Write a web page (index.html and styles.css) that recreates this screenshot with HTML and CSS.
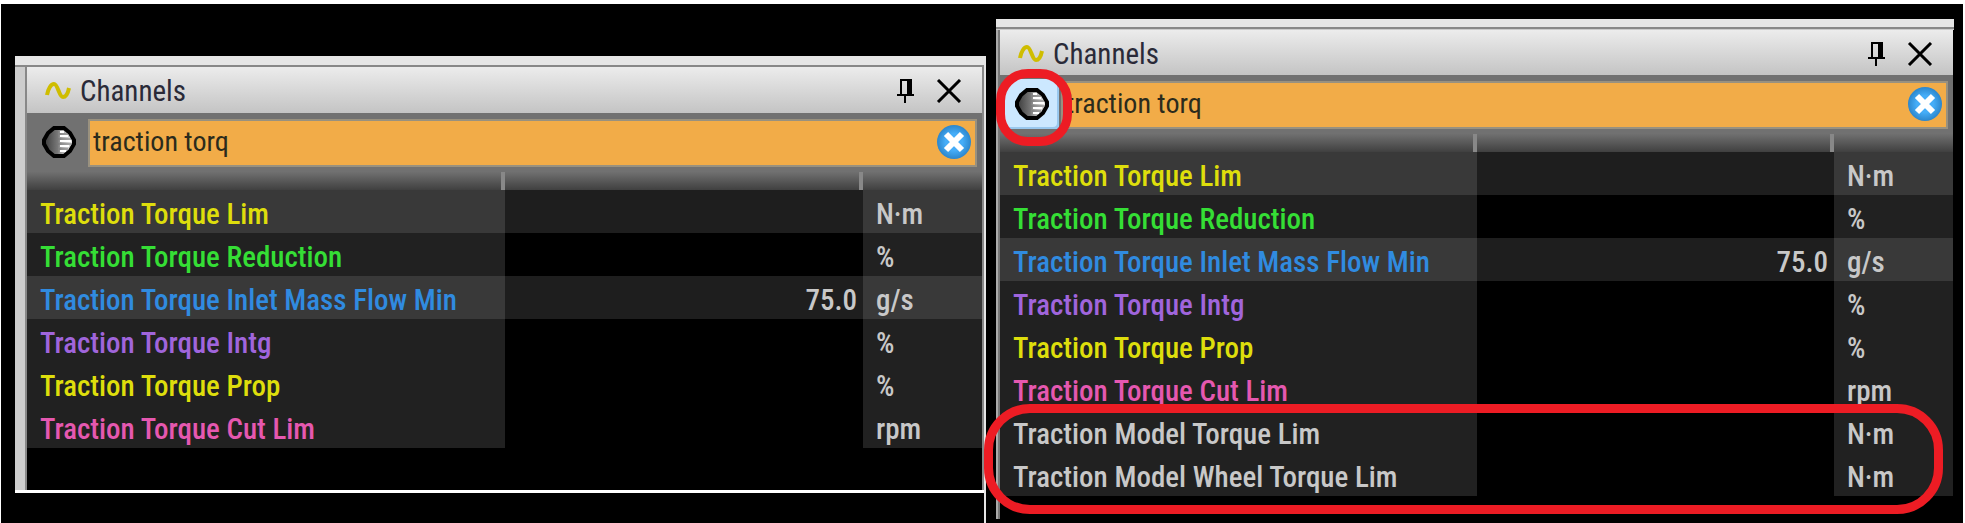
FILE: index.html
```html
<!DOCTYPE html>
<html lang="en">
<head>
    <meta charset="UTF-8">
    <meta name="viewport" content="width=device-width, initial-scale=1.0">
    <title>Channels</title>
    <link rel="stylesheet" href="styles.css">
</head>
<body>

<!-- Shared icons -->
<svg class="sprites" aria-hidden="true">
    <linearGradient id="shade">
        <stop offset="0" stop-color="#3a3a3a"/>
        <stop offset="0.45" stop-color="#777"/>
        <stop offset="0.6" stop-color="#aaa"/>
        <stop offset="1" stop-color="#f2f2f2"/>
    </linearGradient>
    <radialGradient id="blue">
        <stop offset="0.5" stop-color="#45adf8"/>
        <stop offset="1" stop-color="#2c86cc"/>
    </radialGradient>
    <symbol id="wave" viewBox="0 0 26 18">
        <path d="M2 13 C3 7 6 2 9 2 C13 2 14 15 18 15 C21 15 23 11 24 6" fill="none" stroke="#cfbd00" stroke-width="4"/>
    </symbol>
    <symbol id="pin" viewBox="0 0 18 26">
        <path d="M4 16 V2 H14 V16 M0 17 H17 M8 17 V25" fill="none" stroke="#000" stroke-width="2"/>
        <path d="M10 2 H15 V16 H10 Z"/>
    </symbol>
    <symbol id="close" viewBox="0 0 26 24">
        <path d="M2 1 L24 23 M24 1 L2 23" stroke="#000" stroke-width="3"/>
    </symbol>
    <symbol id="filter" viewBox="0 0 34 32">
        <path d="M12 2 H22 L28 7 L32 14 V18 L28 25 L22 30 H12 L6 25 L2 18 V14 L6 7 Z" fill="url(#shade)" stroke="#000" stroke-width="4"/>
        <path d="M17 8 H26 M16 13 H29 M16 18 H30 M17 23 H26" stroke="#777" stroke-width="1"/>
        <path d="M18 6 H22 M18 10 H26 M18 15 H29 M18 20 H27 M18 25 H24" stroke="#fff" stroke-width="2"/>
    </symbol>
    <symbol id="clear" viewBox="0 0 34 34">
        <circle cx="17" cy="17" r="17" fill="url(#blue)"/>
        <path d="M9 9 L25 25 M25 9 L9 25" stroke="#fff" stroke-width="6"/>
    </symbol>
</svg>

<div class="side side-before">
    <section class="panel">
        <div class="titlebar">
            <svg class="icon-wave"><use href="#wave"/></svg>
            <h2>Channels</h2>
            <button class="tool" aria-label="Pin"><svg class="icon-pin"><use href="#pin"/></svg></button>
            <button class="tool" aria-label="Close"><svg class="icon-close"><use href="#close"/></svg></button>
        </div>
        <div class="search">
            <button class="filter" aria-label="Match words"><svg class="icon-filter"><use href="#filter"/></svg></button>
            <div class="field">
                <input type="text" value="traction torq" aria-label="Search channels">
                <button class="tool" aria-label="Clear search"><svg class="icon-clear"><use href="#clear"/></svg></button>
            </div>
        </div>
        <table class="channels">
            <thead>
                <tr><th class="name"></th><th class="value"></th><th class="unit"></th></tr>
            </thead>
            <tbody>
                <tr class="lit"><td class="yellow">Traction Torque Lim</td><td></td><td>N·m</td></tr>
                <tr><td class="green">Traction Torque Reduction</td><td></td><td>%</td></tr>
                <tr class="lit"><td class="blue">Traction Torque Inlet Mass Flow Min</td><td>75.0</td><td>g/s</td></tr>
                <tr><td class="purple">Traction Torque Intg</td><td></td><td>%</td></tr>
                <tr><td class="yellow">Traction Torque Prop</td><td></td><td>%</td></tr>
                <tr><td class="pink">Traction Torque Cut Lim</td><td></td><td>rpm</td></tr>
            </tbody>
        </table>
    </section>
</div>

<div class="side side-after">
    <section class="panel">
        <div class="titlebar">
            <svg class="icon-wave"><use href="#wave"/></svg>
            <h2>Channels</h2>
            <button class="tool" aria-label="Pin"><svg class="icon-pin"><use href="#pin"/></svg></button>
            <button class="tool" aria-label="Close"><svg class="icon-close"><use href="#close"/></svg></button>
        </div>
        <div class="search">
            <button class="filter active" aria-label="Match words" aria-pressed="true"><svg class="icon-filter"><use href="#filter"/></svg></button>
            <div class="field">
                <input type="text" value="traction torq" aria-label="Search channels">
                <button class="tool" aria-label="Clear search"><svg class="icon-clear"><use href="#clear"/></svg></button>
            </div>
        </div>
        <table class="channels">
            <thead>
                <tr><th class="name"></th><th class="value"></th><th class="unit"></th></tr>
            </thead>
            <tbody>
                <tr class="lit"><td class="yellow">Traction Torque Lim</td><td></td><td>N·m</td></tr>
                <tr><td class="green">Traction Torque Reduction</td><td></td><td>%</td></tr>
                <tr class="lit"><td class="blue">Traction Torque Inlet Mass Flow Min</td><td>75.0</td><td>g/s</td></tr>
                <tr><td class="purple">Traction Torque Intg</td><td></td><td>%</td></tr>
                <tr><td class="yellow">Traction Torque Prop</td><td></td><td>%</td></tr>
                <tr><td class="pink">Traction Torque Cut Lim</td><td></td><td>rpm</td></tr>
                <tr><td>Traction Model Torque Lim</td><td></td><td>N·m</td></tr>
                <tr><td>Traction Model Wheel Torque Lim</td><td></td><td>N·m</td></tr>
            </tbody>
        </table>
    </section>
    <div class="mark mark-button"></div>
    <div class="mark mark-rows"></div>
</div>

</body>
</html>
```

FILE: styles.css
```css
* {
    box-sizing: border-box;
}
body {
    margin: 0;
    min-height: 100vh;
    display: flex;
    gap: 10px;
    padding: 0 9px 0 14px;
    border: solid white;
    border-width: 4px 2px 0 1px;
    background: black;
    overflow: hidden;
    font-family: "Roboto Condensed", "Liberation Sans Narrow", Roboto, sans-serif;
}
.sprites {
    position: absolute;
    width: 0;
    height: 0;
}

/* The two windows */
.side {
    min-width: 0;
}
.side-before {
    flex: 969 1 0;
    margin-top: 52px;
    border-right: 2px solid #e6e6e6;
}
.side-after {
    flex: 958 1 0;
    position: relative;
    margin-top: 15px;
}
.side-before .panel {
    padding: 11px 2px 42px 12px;
    border-bottom: 3px solid #fff;
    background: linear-gradient(#e6e6e6 9px, #888 9px, #888 11px, transparent 11px),
        linear-gradient(#888, #888) right / 2px 100% no-repeat,
        linear-gradient(to right, #cdcdcd 10px, #888 10px, #888 12px, black 12px);
}
.side-after .panel {
    padding: 11px 1px 23px 4px;
    background: linear-gradient(#e6e6e6 8px, #888 8px, #888 10px, #ccc 10px, #ccc 11px, transparent 11px),
        linear-gradient(to right, #aaa 2px, #777 2px, #777 4px, black 4px);
}

/* Title bar */
.titlebar {
    display: flex;
    align-items: center;
    gap: 9px;
    height: 46px;
    padding: 2px 20px 0 18px;
    background: linear-gradient(#ececec, #c4c4c4);
}
.side-after .titlebar {
    height: 45px;
}
.titlebar h2 {
    flex: 1;
    margin: 0;
    font-size: 29px;
    font-weight: normal;
    line-height: 36px;
    color: #2a2a38;
}
.titlebar .tool + .tool {
    margin-left: 12px;
}
.tool {
    display: flex;
    padding: 0;
    border: none;
    background: none;
    cursor: pointer;
}
.icon-wave {
    width: 26px;
    height: 18px;
}
.icon-pin {
    width: 18px;
    height: 26px;
}
.icon-close {
    width: 26px;
    height: 24px;
}
.icon-filter {
    width: 34px;
    height: 32px;
}
.icon-clear {
    width: 34px;
    height: 34px;
}

/* Search row */
.search {
    display: flex;
    align-items: flex-end;
    gap: 2px;
    height: 59px;
    padding: 0 5px 5px 4px;
    background: #717171;
}
.filter {
    display: flex;
    align-items: center;
    justify-content: center;
    width: 55px;
    height: 50px;
    padding: 0;
    border: none;
    border-radius: 4px;
    background: none;
    cursor: pointer;
}
.filter.active {
    background: #cce8ff;
    box-shadow: inset -2px -2px #99c8ee;
}
.field {
    flex: 1;
    display: flex;
    align-items: center;
    height: 48px;
    padding: 0 4px 2px 3px;
    border: 2px solid #99917f;
    background: #f2ac48;
}
.field input {
    flex: 1;
    min-width: 0;
    padding: 0;
    border: none;
    outline: none;
    background: none;
    font-family: inherit;
    font-size: 28px;
    line-height: 36px;
    color: #2b2b1c;
}

/* Channel list */
.channels {
    width: 100%;
    table-layout: fixed;
    border-collapse: collapse;
    font-size: 29px;
    font-weight: 500;
    line-height: 34px;
    color: #c8c8c8;
}
.channels thead tr {
    background: linear-gradient(#707070, #404040);
}
.channels th {
    height: 18px;
    padding: 0;
}
.channels .name {
    width: 50%;
}
.channels .unit {
    width: 119px;
}
.channels .name,
.channels .value {
    background: linear-gradient(#888, #888) right / 4px 100% no-repeat;
}
.channels td {
    height: 43px;
    padding: 4px 13px 0;
    background: #212121;
    white-space: nowrap;
}
.channels td:nth-child(2) {
    padding: 4px 6px 0;
    background: black;
    text-align: right;
}
.channels .lit td {
    background: #393939;
}
.channels .lit td:nth-child(2) {
    background: #1e1e1e;
}
.channels .yellow {
    color: #dede0c;
}
.channels .green {
    color: #35de35;
}
.channels .blue {
    color: #308be0;
}
.channels .purple {
    color: #a065dc;
}
.channels .pink {
    color: #e558b0;
}

/* Red highlights */
.mark {
    position: absolute;
    border: 9px solid #ed1c24;
    pointer-events: none;
}
.mark-button {
    top: 50px;
    left: 0;
    width: 76px;
    height: 77px;
    border-radius: 32px;
}
.mark-rows {
    top: 385px;
    left: -12px;
    right: 11px;
    height: 110px;
    border-radius: 46px;
}
```
